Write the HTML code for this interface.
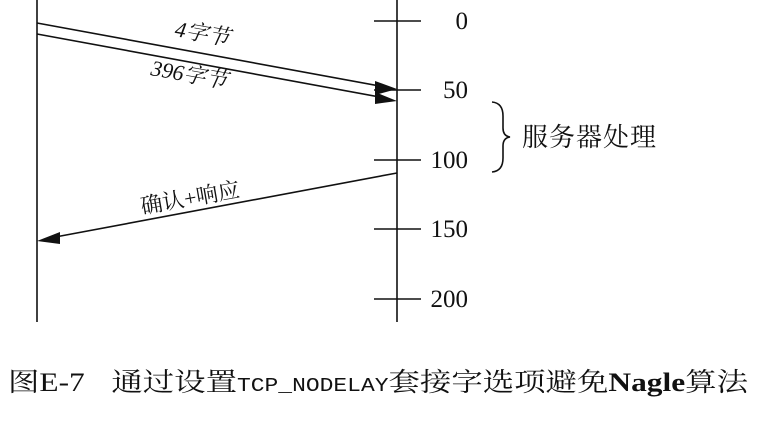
<!DOCTYPE html>
<html><head><meta charset="utf-8"><style>
body{margin:0;background:#fff;width:774px;height:420px;overflow:hidden;}
svg text{font-family:"Liberation Serif","Noto Serif CJK SC",serif;fill:#111;}
</style></head><body>
<svg width="774" height="420" viewBox="0 0 774 420">
<g stroke="#111" stroke-width="1.6" fill="none">
<line x1="37" y1="0" x2="37" y2="322"/>
<line x1="397" y1="0" x2="397" y2="322"/>
<line x1="374" y1="21" x2="421" y2="21"/>
<line x1="374" y1="90" x2="421" y2="90"/>
<line x1="374" y1="160" x2="421" y2="160"/>
<line x1="374" y1="229" x2="421" y2="229"/>
<line x1="374" y1="299" x2="421" y2="299"/>
<line x1="37" y1="23" x2="385" y2="87"/>
<line x1="37" y1="34" x2="385" y2="98"/>
<line x1="397" y1="173" x2="50" y2="238"/>
<path d="M492 102 Q503 103 503 116 L503 128 Q503 136 510 137 Q503 138 503 146 L503 158 Q503 171 492 172"/>
</g>
<g fill="#111">
<polygon points="397,89 375,81 375,95"/>
<polygon points="397,101 375,92 375,104"/>
<polygon points="37,241 60,232 60,244"/>
</g>
<g font-size="25" text-anchor="end">
<text x="468" y="29">0</text>
<text x="468" y="98">50</text>
<text x="468" y="168">100</text>
<text x="468" y="237">150</text>
<text x="468" y="307">200</text>
</g>
<text x="522" y="146" font-size="26" textLength="134">服务器处理</text>
<text font-size="22" font-style="italic" transform="translate(174,36) rotate(10)">4字节</text>
<text font-size="22" font-style="italic" transform="translate(150,75) rotate(10)">396字节</text>
<text font-size="22" transform="translate(142,214) rotate(-10)">确认+响应</text>
<text x="8" y="391" font-size="26" textLength="740" lengthAdjust="spacingAndGlyphs">图E-7<tspan dx="22">通过设置</tspan><tspan font-size="19" font-family="Liberation Mono">TCP_NODELAY</tspan>套接字选项避免<tspan font-weight="bold">Nagle</tspan>算法</text>
</svg>
</body></html>
